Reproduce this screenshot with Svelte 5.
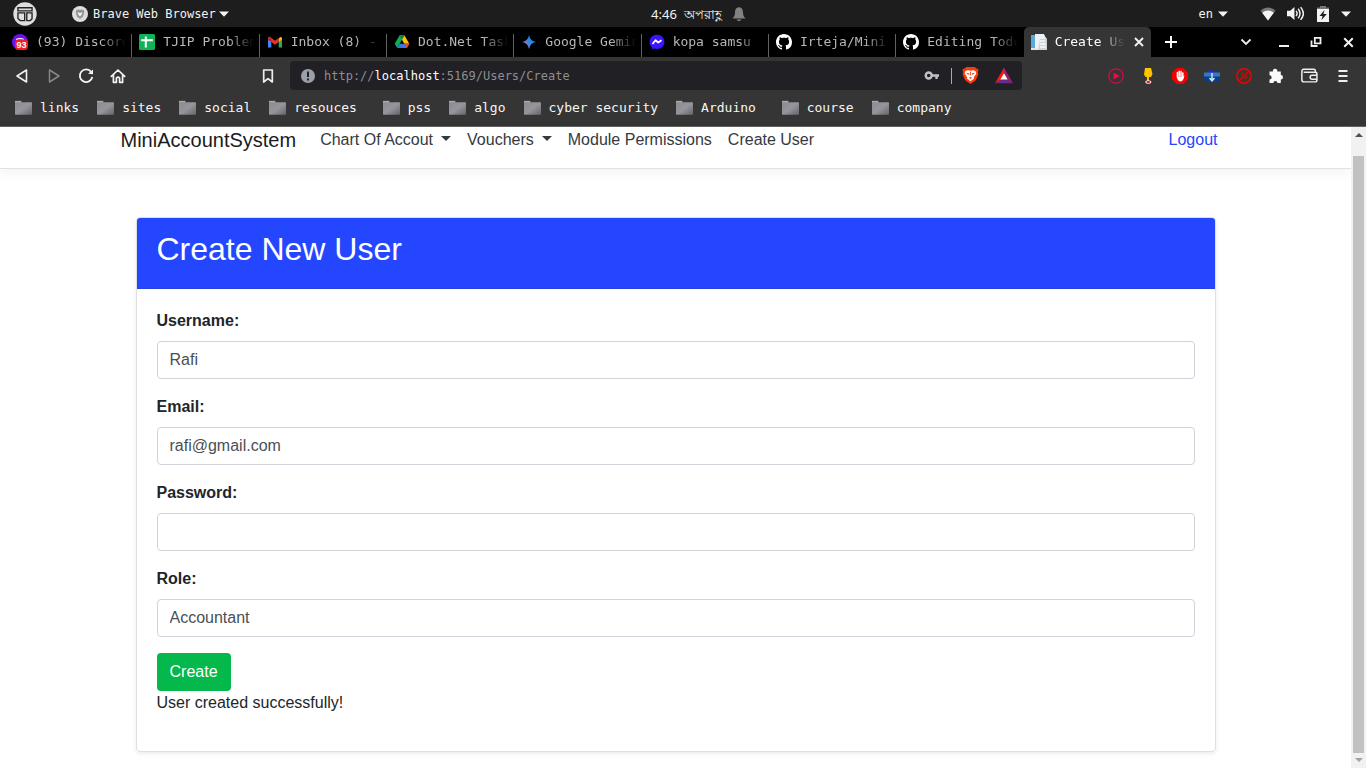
<script>
  const tabs = [
    { icon: 'discord', title: '(93) Discord' },
    { icon: 'sheet', title: 'TJIP Problems' },
    { icon: 'gmail', title: 'Inbox (8) - m' },
    { icon: 'drive', title: 'Dot.Net Task' },
    { icon: 'gemini', title: 'Google Gemini' },
    { icon: 'messenger', title: 'kopa samsu' },
    { icon: 'github', title: 'Irteja/Mini-A' },
    { icon: 'github', title: 'Editing Todo' },
    { icon: 'page', title: 'Create User', active: true }
  ];
  const bookmarks = ['links', 'sites', 'social', 'resouces ', 'pss', 'algo', 'cyber security', 'Arduino ', 'course', 'company'];
  const extensions = ['play', 'glass', 'hand', 'box', 'block', 'puzzle'];

  let username = $state('Rafi');
  let email = $state('rafi@gmail.com');
  let password = $state('');
  let role = $state('Accountant');
</script>

{#snippet icon(name, size = 16)}
  <svg width={size} height={size} viewBox="0 0 16 16" aria-hidden="true" fill="none">
    {#if name === 'discord'}
      <circle cx="8" cy="8" r="8" fill="#6a10f5" />
      <path d="M4 5.5Q8 3.8 12 5.5" stroke="#fff" stroke-width="1.2" />
      <rect x="3" y="5.5" width="13" height="10.5" rx="3.5" fill="#f02020" />
      <text x="9.5" y="14" text-anchor="middle" font-size="9" font-weight="700" font-family="Liberation Sans, sans-serif" fill="#fff">93</text>
    {:else if name === 'sheet'}
      <rect width="16" height="16" rx="1.5" fill="#12b357" />
      <path d="M6.8 2.4V13.6M2.2 6.3H13.8" stroke="#fff" stroke-width="2" />
    {:else if name === 'gmail'}
      <path d="M1 3.5V13.5H4.3V7L1 4.5Z" fill="#4285f4" />
      <path d="M15 3.5V13.5H11.7V7L15 4.5Z" fill="#34a853" />
      <path d="M11.7 4.4 13 3.2Q15 2.3 15 4.6V5.4L11.7 8Z" fill="#fbbc04" />
      <path d="M1 5.4V4.3Q1.2 2.1 3.2 3.1L8 6.8 11.7 4V8L8 10.8 4.3 8Z" fill="#ea3323" />
      <path d="M1 5.4V4.3Q1.2 2.1 3.2 3.1L4.3 4V8Z" fill="#c5221f" />
    {:else if name === 'drive'}
      <path d="M5.5 1.5 8 5.8 3.2 14 .7 9.8Z" fill="#0fa958" />
      <path d="M5.5 1.5H10.5L15.3 9.8H10.3Z" fill="#fdc20a" />
      <path d="M5.6 9.8H15.3L12.9 14H3.2Z" fill="#3577e5" />
      <path d="M15.3 9.8 12.9 14 10.3 9.8Z" fill="#e94235" />
      <path d="M5.5 1.5H10.5L8 5.8Z" fill="#07803e" />
    {:else if name === 'gemini'}
      <defs><linearGradient id="gem" x1="1" y1="12" x2="15" y2="5" gradientUnits="userSpaceOnUse"><stop stop-color="#d0637c" /><stop offset=".3" stop-color="#7c7bd0" /><stop offset=".6" stop-color="#1c8be8" /></linearGradient></defs>
      <path d="M8 1Q9 7 15 8 9 9 8 15 7 9 1 8 7 7 8 1Z" fill="url(#gem)" />
    {:else if name === 'messenger'}
      <path d="M8 .8C3.700.8.6 3.900.6 7.900c0 2.100.9 4 2.400 5.300l.2 2.300 2.200-1c.8.3 1.700.4 2.600.4 4.300 0 7.400-3.100 7.400-7S12.300.8 8 .8Z" fill="#3a15ff" />
      <path d="m3.500 10 3-3.700 2.700 2.200 3.300-2.200" stroke="#fff" stroke-width="1.800" stroke-linejoin="round" />
    {:else if name === 'github'}
      <path fill="#fff" d="M8 0C3.580 0 0 3.580 0 8c0 3.540 2.290 6.530 5.470 7.590.4.070.55-.170.55-.380 0-.190-.010-.820-.010-1.490-2.010.370-2.530-.490-2.690-.940-.090-.230-.480-.940-.820-1.130-.280-.150-.680-.520-.010-.530.630-.010 1.080.580 1.230.820.720 1.210 1.870.870 2.330.660.070-.520.280-.870.510-1.070-1.780-.2-3.640-.890-3.640-3.950 0-.870.310-1.590.820-2.150-.080-.2-.360-1.020.080-2.120 0 0 .670-.210 2.200.820.640-.180 1.320-.270 2-.270s1.360.090 2 .270c1.530-1.040 2.200-.820 2.200-.820.440 1.100.160 1.920.080 2.120.510.560.820 1.270.820 2.150 0 3.070-1.870 3.750-3.650 3.950.290.250.540.730.540 1.480 0 1.070-.010 1.930-.010 2.200 0 .210.150.460.550.380A8.010 8.010 0 0 0 16 8c0-4.420-3.580-8-8-8Z" />
    {:else if name === 'page'}
      <path d="M0 1H13L16 5V16H0Z" fill="#dce7ef" />
      <path d="M0 1H4V14H0Z" fill="#5aa9d8" />
      <path d="M4 0H13L14 3V16L4 14Z" fill="#eef1f6" />
      <path d="M9 5H16V16H7Z" fill="#cdd3dd" />
      <path d="M9 7h5M9 10h6M9 13h6" stroke="#f9fafc" stroke-width="1.3" />
    {:else if name === 'back'}
      <path d="M12.5 2V14L3 8Z" stroke="#f1f1f1" stroke-width="1.6" stroke-linejoin="round" />
    {:else if name === 'forward'}
      <path d="M3.5 2V14L13 8Z" stroke="#868686" stroke-width="1.5" stroke-linejoin="round" />
    {:else if name === 'reload'}
      <path d="M13.2 4A6.300 6.300 0 1 0 14.300 9" stroke="#f4f4f4" stroke-width="1.8" />
      <path d="M10 5.800 15 1.500V6.200Z" fill="#f4f4f4" />
    {:else if name === 'home'}
      <path d="M1.300 8.300 8 2l6.700 6.300M3.400 7v7.300h3V10Q8 8.300 9.600 10v4.300h3V7" stroke="#f4f4f4" stroke-width="1.7" stroke-linejoin="round" stroke-linecap="round" />
    {:else if name === 'bookmark'}
      <path d="M3.700 2H12.300V14L8 10.700 3.700 14Z" stroke="#eee" stroke-width="1.7" stroke-linejoin="round" />
    {:else if name === 'info'}
      <circle cx="8" cy="8" r="7" fill="#9ba0a8" />
      <path d="M8 3.500V9M8 10.500V12.500" stroke="#202127" stroke-width="2" />
    {:else if name === 'key'}
      <circle cx="4.700" cy="7.500" r="3" stroke="#c1c1c4" stroke-width="2.400" />
      <path d="M7.500 7.500H15M12.500 7.500V11" stroke="#c1c1c4" stroke-width="2.400" />
    {:else if name === 'brave'}
      <path d="M4 0H12L13.500 1.500 15.500 2 15 5.500 15.300 7 13 12.500 8 16 3 12.500.7 7 1 5.500.5 2 2.500 1.500Z" fill="#fb3b0b" />
      <path d="M3.300 3.800 5.500 3 8 3.500 10.500 3 12.700 3.800 13.500 6 11 9.800 11.200 11 8 13.500 4.800 11 5 9.800 2.500 6Z" fill="#fff" />
      <path d="M4 5.500 7 6.200 6.500 7.200 4.700 6.700ZM12 5.500 9 6.200 9.500 7.200 11.300 6.700ZM6.500 10 8 9.300 9.500 10 8 11.200ZM7.600 4.500h.8V8h-.8Z" fill="#fb3b0b" />
    {:else if name === 'bat'}
      <path d="M8 .5 0 14.500 8 10Z" fill="#ff1707" />
      <path d="M8 .5 16 14.500 8 10Z" fill="#9e1f63" />
      <path d="M0 14.500H16L8 10Z" fill="#662d91" />
      <path d="M8 5.500 4.800 11.200H11.200Z" fill="#fff" />
    {:else if name === 'play'}
      <circle cx="8" cy="8" r="7.200" stroke="#d60b43" stroke-width="1.300" />
      <path d="M5.500 4.500 12 8 5.500 11.500Z" fill="#ef0843" />
    {:else if name === 'glass'}
      <path d="M5 0H11L12.500 6 11 9H8.800V13H7.200V9H5.500L4 6.500Z" fill="#ffc400" />
      <path d="M7.900 8V13" stroke="#ffc400" stroke-width="2" />
      <ellipse cx="8.300" cy="14" rx="3" ry="1.800" fill="#f5dce8" />
      <ellipse cx="8.300" cy="14" rx="1.800" ry="1.100" fill="#e6003c" />
    {:else if name === 'hand'}
      <path d="M4.700 0H11.300L16 4.700V11.300L11.300 16H4.700L0 11.300V4.700Z" fill="#f40000" />
      <path d="M5.400 9V4.500M7.200 8V3.200M9 8V3.500M10.800 9V5" stroke="#fff" stroke-width="1.500" stroke-linecap="round" />
      <path d="M4.700 8.500H11.500L12.500 7.500 11.500 11Q10.500 13.500 8 13.500 5.500 13 4.700 8.500Z" fill="#fff" />
    {:else if name === 'box'}
      <path d="M2.500 5Q6 0 9.500 3L14 5Z" fill="#2925d9" />
      <rect y="4.500" width="16" height="4.500" fill="#3479b8" />
      <path d="M0 8.500H16L15 14H1Z" fill="#083e91" />
      <path d="M8 5V12M5.500 10 8 12.800 10.500 10" stroke="#c5e8ff" stroke-width="1.500" />
    {:else if name === 'block'}
      <circle cx="8" cy="8" r="7.100" stroke="#f20000" stroke-width="1.600" />
      <path d="M3 13 13 3M6 4.500V8M8.500 10.500 11.500 8.300" stroke="#e40000" stroke-width="1.500" />
    {:else if name === 'puzzle'}
      <path d="M1.500 3.500H5A2.200 2.200 0 1 1 9.200 3.500H12.800V7A2.200 2.200 0 1 1 12.800 11.400V15H9.500A2.100 2.100 0 0 0 5.300 15H1.500V11.500A2.100 2.100 0 0 0 1.500 7.300Z" fill="#fafafa" />
    {:else if name === 'wallet'}
      <path d="M13.500 5V3.500Q13.500 2.200 12 2.200H2.500Q.8 2.200.8 4.500V12Q.8 14 2.800 14H13.200Q15 14 15 12.200V6.500Q15 5 13.200 5H2.500M15 7.700H10.500A1.900 1.900 0 0 0 10.500 11.500H15" stroke="#eee" stroke-width="1.400" />
    {:else if name === 'menu'}
      <path d="M3.500 3H12.500M3.500 8H12.500M3.500 13H12.500" stroke="#eee" stroke-width="2" />
    {:else if name === 'close'}
      <path d="M4 4 12 12M12 4 4 12" stroke="#f2f2f2" stroke-width="1.900" />
    {:else if name === 'plus'}
      <path d="M8 2V14M2 8H14" stroke="#fff" stroke-width="1.900" />
    {:else if name === 'chevron'}
      <path d="M3.500 5.500 8 10 12.500 5.500" stroke="#eee" stroke-width="1.800" />
    {:else if name === 'minimize'}
      <path d="M3 12H13" stroke="#eee" stroke-width="2" />
    {:else if name === 'restore'}
      <path d="M6.800 3.800H12.500V9.300H6.800ZM3.500 6.500V12H9.500" stroke="#eee" stroke-width="1.800" />
    {:else if name === 'folder'}
      <defs><linearGradient id="fold" x1="0" y1="0" x2="1" y2="1"><stop stop-color="#8c8b93" /><stop offset=".5" stop-color="#96959c" /><stop offset="1" stop-color="#66656a" /></linearGradient></defs>
      <path d="M0 .8H6V4H0Z" fill="#aaa" />
      <rect y="2" width="16" height="11.800" rx=".8" fill="url(#fold)" />
    {:else if name === 'layout'}
      <circle cx="8" cy="8" r="7.800" fill="#dedede" />
      <path d="M3.300 3.800H12.700V5.900H3.300ZM3.300 7.200H7.800V12.400H4.800L3.300 11ZM9.200 7.200H12.700V11.200L11.500 12.400H9.200Z" fill="#dedede" stroke="#222" stroke-width=".9" />
    {:else if name === 'lion'}
      <circle cx="8" cy="8" r="8" fill="#deded9" />
      <path d="M4.500 3.800H11.500L12.300 6 11 10.500 8 13 5 10.500 3.700 6Z" fill="#929292" />
      <path d="M5.500 6 8 7 10.500 6 9.500 9 8 10.500 6.500 9Z" fill="#eee" />
    {:else if name === 'caret'}
      <path d="M3 5.500H13L8 10.800Z" fill="#f2f2f2" />
    {:else if name === 'bell'}
      <path d="M8 1.200C5 1.200 4 4 4 6.500 4 9.500 3 10.500 1.500 12.500H14.500C13 10.500 12 9.500 12 6.500 12 4 11 1.200 8 1.200ZM5.500 13.500H10.500L9 15H7Z" fill="#818181" />
    {:else if name === 'wifi'}
      <path d="M.5 4.500Q8-1.500 15.500 4.500L8 14.500Z" fill="#777" />
      <path d="M2.200 6.700Q8 2.500 13.800 6.700L8 14.500Z" fill="#f4f4f4" />
    {:else if name === 'volume'}
      <path d="M0 5.500H3L7 1.800V14.200L3 10.500H0Z" fill="#f3f3f3" />
      <path d="M8.500 5.500Q10.500 8 8.500 10.500M10.500 3.500Q14 8 10.500 12.500M12.800 2Q18 8 12.800 14" stroke="#eee" stroke-width="1.400" />
    {:else if name === 'battery'}
      <path d="M5 0H11V1.500H14V5H2V1.500H5Z" fill="#777" />
      <path d="M2 3H14V16H2Z" fill="#f4f4f4" />
      <path d="M9.500 4 4.500 10H7.500L6.500 14 11.800 8H8.500Z" fill="#202020" />
    {/if}
  </svg>
{/snippet}

<div class="screen">
  <header class="system">
    <div class="app-menu">
      {@render icon('layout', 24)}
      <button class="app-name">{@render icon('lion')}<span>Brave Web Browser</span>{@render icon('caret')}</button>
    </div>
    <div class="clock"><span>4:46</span><span>অপরাহ্ণ</span>{@render icon('bell')}</div>
    <div class="status">
      <button class="lang"><span>en</span>{@render icon('caret')}</button>
      {@render icon('wifi')}{@render icon('volume', 17)}{@render icon('battery')}{@render icon('caret')}
    </div>
  </header>

  <div class="tabstrip">
    <div class="tabs">
      {#each tabs as tab}
        <div class="tab" class:active={tab.active}>
          {@render icon(tab.icon)}
          <span class="tab-title">{tab.title}</span>
          {#if tab.active}<button class="tab-close" aria-label="Close tab">{@render icon('close')}</button>{/if}
        </div>
      {/each}
    </div>
    <button class="new-tab" aria-label="New tab">{@render icon('plus')}</button>
    <div class="window-controls">
      <button class="tab-search" aria-label="Search tabs">{@render icon('chevron')}</button>
      <button aria-label="Minimize">{@render icon('minimize')}</button>
      <button aria-label="Restore">{@render icon('restore')}</button>
      <button aria-label="Close">{@render icon('close', 17)}</button>
    </div>
  </div>

  <div class="chrome">
    <div class="toolbar">
      <div class="tools history">
        {#each ['back', 'forward', 'reload', 'home'] as name}
          <button class="tool" aria-label={name}>{@render icon(name)}</button>
        {/each}
      </div>
      <button class="tool" aria-label="bookmark">{@render icon('bookmark')}</button>
      <div class="address">
        {@render icon('info')}
        <div class="url">http://<b>localhost</b>:5169/Users/Create</div>
        {@render icon('key')}
        <span class="divider"></span>
        {@render icon('brave', 17)}
        <span class="bat">{@render icon('bat', 18)}</span>
      </div>
      <div class="tools">
        {#each extensions as name}
          <button class="tool" aria-label={name}>{@render icon(name)}</button>
        {/each}
        <button class="tool wide" aria-label="wallet">{@render icon('wallet', 17)}</button>
        <button class="tool wide" aria-label="menu">{@render icon('menu')}</button>
      </div>
    </div>
    <nav class="bookmarks">
      {#each bookmarks as name}
        <a href="#top">{@render icon('folder', 17)}<span>{name}</span></a>
      {/each}
    </nav>
  </div>

  <div class="viewport">
    <div class="page">
      <nav class="navbar">
        <div class="container nav-row">
          <a class="brand" href="#top">MiniAccountSystem</a>
          <a class="dropdown" href="#chart">Chart Of Accout</a>
          <a class="dropdown" href="#vouchers">Vouchers</a>
          <a href="#permissions">Module Permissions</a>
          <a href="#create">Create User</a>
          <a class="logout" href="#logout">Logout</a>
        </div>
      </nav>
      <main class="container">
        <section class="card">
          <h2>Create New User</h2>
          <form onsubmit={(e) => e.preventDefault()}>
            <label for="username">Username:</label>
            <input id="username" type="text" bind:value={username} />
            <label for="email">Email:</label>
            <input id="email" type="email" bind:value={email} />
            <label for="password">Password:</label>
            <input id="password" type="password" bind:value={password} />
            <label for="role">Role:</label>
            <select id="role" bind:value={role}><option>Accountant</option></select>
            <button class="submit" type="submit">Create</button>
            <p>User created successfully!</p>
          </form>
        </section>
      </main>
    </div>
    <div class="scrollbar" aria-hidden="true">
      <span class="arrow up"></span>
      <span class="thumb"></span>
      <span class="arrow down"></span>
    </div>
  </div>
</div>

<style>
  :global(body) { margin: 0; background: #fff; }
  .screen, .screen * { box-sizing: border-box; }
  .screen {
    display: flex;
    flex-direction: column;
    min-height: 100vh;
    font-family: "DejaVu Sans Mono", monospace;
    font-size: 13px;
    line-height: 16px;
  }
  svg { display: block; flex: none; }
  button {
    display: flex;
    align-items: center;
    justify-content: center;
    padding: 0;
    border: 0;
    background: none;
    color: inherit;
    font: inherit;
  }
  a { color: inherit; text-decoration: none; }

  .system {
    display: grid;
    grid-template-columns: 1fr auto 1fr;
    align-items: center;
    height: 27px;
    background: #1d1d1d;
    color: #f2f2f2;
    font-size: 12px;
  }
  .app-menu { display: flex; align-items: center; gap: 35px; padding-left: 13px; }
  .app-name { gap: 5px; }
  .app-name span { margin-right: -5px; }
  .clock { display: flex; align-items: center; gap: 7px; margin-left: 32px; font-family: "Noto Sans", sans-serif; font-size: 13px; }
  .clock svg { margin-left: 2px; }
  .status { display: flex; align-items: center; justify-content: flex-end; gap: 11px; padding-right: 12px; }
  .status > :last-child { margin-left: -4px; }
  .lang { gap: 2px; margin-right: 18px; }

  .tabstrip { display: flex; height: 30px; background: #000; color: #b8b8b8; color-scheme: dark; }
  .tabs { display: flex; flex: 1; min-width: 0; padding-left: 5px; }
  .tab { display: flex; flex: 1 1 0; min-width: 0; align-items: center; gap: 8px; padding: 0 6px 0 7px; position: relative; }
  .tab:not(.active)::after { content: ""; position: absolute; right: 0; bottom: 0; width: 1px; height: 23px; background: #626262; }
  .tab:nth-child(8)::after { display: none; }
  .tab-title {
    flex: 1;
    min-width: 0;
    overflow: hidden;
    white-space: nowrap;
    mask-image: linear-gradient(to right, #000 72%, transparent);
  }
  .tab.active { border-radius: 5px 5px 0 0; background: #353535; color: #fff; }
  .tab.active .tab-title { mask-image: linear-gradient(to right, #000 60%, transparent); }
  .tab-close { width: 12px; }
  .new-tab { width: 40px; margin-right: 32px; }
  .window-controls { display: flex; padding-right: 2px; }
  .window-controls button { width: 32px; }
  .window-controls .tab-search { width: 45px; }

  .chrome { border-bottom: 1px solid #626262; background: #353535; color: #f5f5f5; }
  .toolbar { display: flex; height: 36px; padding: 4px 6px 3px; }
  .tools { display: flex; }
  .history { margin-right: 118px; }
  .tool { width: 32px; }
  .wide { width: 34px; }
  .address {
    display: flex;
    flex: 1;
    align-items: center;
    gap: 8px;
    min-width: 0;
    margin: 0 78px 0 6px;
    padding: 0 9px 0 10px;
    border-radius: 4px;
    background: #202025;
    color: #8e8e93;
    font-size: 12px;
  }
  .url { flex: 1; }
  .url b { color: #fff; font-weight: 400; }
  .divider { width: 1px; height: 16px; margin: 0 2px 0 3px; background: #aaa; }
  .bat { margin-left: 8px; }
  .bookmarks { display: flex; align-items: center; gap: 18px; height: 33px; padding: 0 15px 3px; white-space: pre; }
  .bookmarks a { display: flex; align-items: center; gap: 8px; }

  .viewport {
    display: flex;
    flex: 1;
    background: #fff;
    color: #212529;
    font-family: "Liberation Sans", Arial, sans-serif;
    font-size: 16px;
    line-height: 24px;
  }
  .page { flex: 1; min-width: 0; padding-bottom: 16px; }
  .container { max-width: 1140px; margin: 0 auto; padding: 0 15px; }
  .navbar { padding-bottom: 15px; border-bottom: 1px solid #dee2e6; box-shadow: 0 4px 12px rgba(0, 0, 0, 0.05); }
  .nav-row { display: flex; gap: 16px; color: #343a40; line-height: 26px; }
  .nav-row .brand { margin-right: 8px; font-size: 20px; color: #1b1b1b; }
  .dropdown::after {
    content: "";
    display: inline-block;
    margin-left: 8px;
    border: 5px solid transparent;
    border-top-color: currentColor;
    border-bottom: 0;
    vertical-align: 4px;
  }
  .nav-row .logout { margin-left: auto; padding-right: 13px; color: #2546ff; }
  .card {
    margin: 48px 15px 0;
    border: 1px solid #dfdfdf;
    border-radius: 4px;
    box-shadow: 0 2px 4px rgba(0, 0, 0, 0.075);
    overflow: hidden;
  }
  h2 {
    margin: 0;
    padding: 12px 20px 20px;
    border-bottom: 1px solid #2342e2;
    background: #2546ff;
    color: #fff;
    font-size: 32px;
    font-weight: 400;
    line-height: 38px;
  }
  form { padding: 20px; }
  label { display: block; margin-bottom: 8px; font-weight: 700; }
  input, select {
    display: block;
    width: 100%;
    height: 38px;
    margin-bottom: 16px;
    padding: 6px 12px;
    border: 1px solid #ced4da;
    border-radius: 4px;
    background: #fff;
    color: #495057;
    font: inherit;
    appearance: none;
  }
  .submit { height: 38px; padding: 0 13px; border-radius: 4px; background: #04b84c; color: #fff; }
  p { margin: 0 0 16px; }

  .scrollbar { display: flex; flex-direction: column; align-items: center; width: 15px; padding: 6px 0; background: #f1f1f1; }
  .arrow { border: 4px solid transparent; }
  .up { margin-bottom: 19px; border-top: 0; border-bottom-color: #505050; }
  .down { margin-top: 5px; border-bottom: 0; border-top-color: #a3a3a3; }
  .thumb { flex: 1; width: 11px; background: #c1c1c1; }
</style>
